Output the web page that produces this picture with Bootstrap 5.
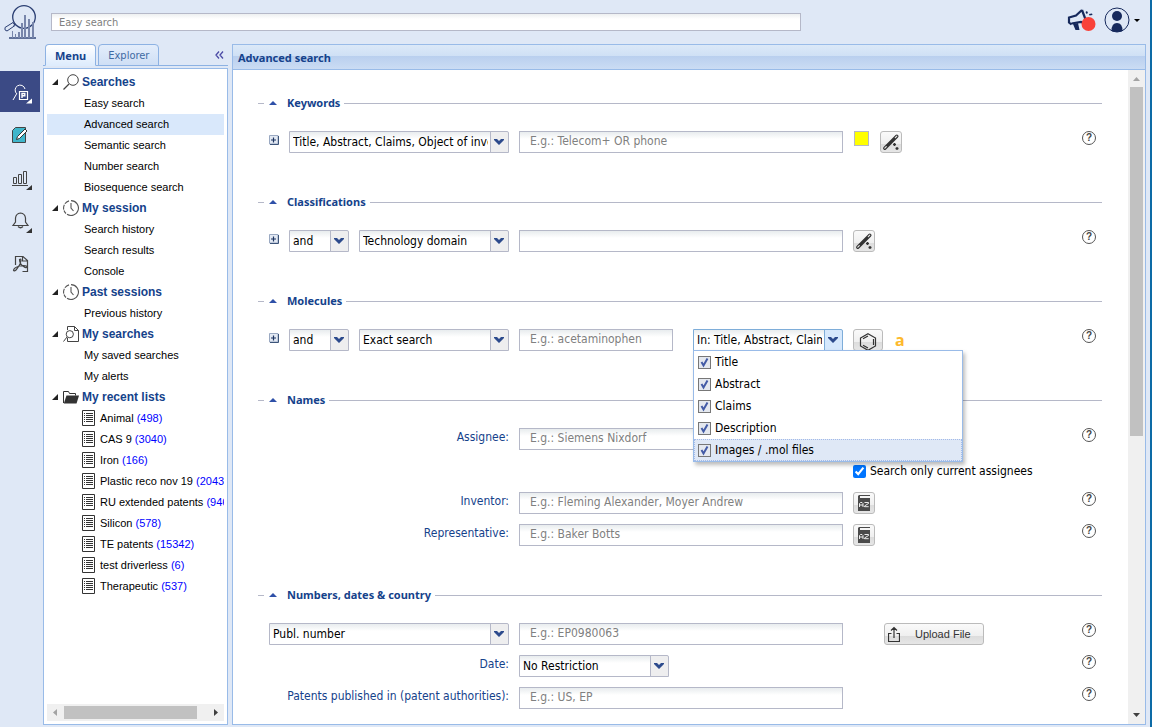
<!DOCTYPE html>
<html lang="en">
<head>
<meta charset="utf-8">
<meta name="viewport" content="width=device-width, initial-scale=1">
<title>Advanced search</title>
<link href="https://cdn.jsdelivr.net/npm/bootstrap@5.3.0/dist/css/bootstrap.min.css" rel="stylesheet">
<style>
:root{--ui:"DejaVu Sans Condensed","Noto Sans",sans-serif;--head:"Noto Sans","DejaVu Sans Condensed",sans-serif;--tree:"Liberation Sans",Arial,sans-serif;
  --frame:#99bbe8;--field:#b5b8c8;--ink:#15428b;--back:#dfe8f6}
body{font:12px/16px var(--ui);color:#000;background:var(--back);border-right:2px solid #0d6ba6}
a{text-decoration:none;color:inherit}
svg{display:block;flex:none}
.topbar{height:44px;padding:0 10px 0 4px}
.workspace{min-height:0;padding-bottom:2px}
.quick{height:18px;width:100%;padding:0 7px;border:1px solid var(--field);background:linear-gradient(#eef0f1,#fff 5px);font:11px/16px var(--ui);border-radius:0}
.quick-box{width:66%;max-width:750px;margin-left:15px}
::placeholder{color:#808080;opacity:1}
.plain{border:0;background:none;padding:0}
/* icon rail */
.rail{width:40px;margin-right:3px;padding-top:27px;gap:2px}
.rail a{height:41px;color:#444}
.rail a.current{background:#3b4a85;color:#fff}
/* side panel */
.side{width:185px;margin-right:4px}
.tab-strip{height:22px;padding-left:2px;gap:2px;border-bottom:1px solid #8db2e3}
.tab-link{height:22px;padding:0 9px;border:1px solid #8db2e3;border-radius:4px 4px 0 0;background:linear-gradient(#e3edfb,#cfdff5);color:#416aa3;font:11px/21px var(--ui)}
.tab-link.current{background:linear-gradient(#fff,#deecfd);border-bottom-color:#deecfd;color:var(--ink);font:bold 11px/21px var(--head)}
.side-body{margin-top:2px;border:1px solid var(--frame);background:#fff;padding:3px}
.tree{font:11px/21px var(--tree);white-space:nowrap}
.tree a{display:flex;align-items:center;height:21px;padding-left:37px}
.tree svg{margin-bottom:1px}
.tree a.picked{background:#d9e8fb}
.tree a.folder{padding-left:5px;font-weight:bold;font-size:12px;color:var(--ink)}
.folder svg:first-child{margin-right:5px}
.folder svg:last-of-type{margin-right:3px}
.tree a.saved{padding-left:35px;gap:5px}
.saved b{font-weight:normal;color:#00f}
.track{background:#f0f0f0}
.track-x{height:17px}.track-y{width:17px}
.thumb{background:#c1c1c1}
.track-end{flex:0 0 17px;height:17px}
/* main panel */
.panel-box{min-width:0;border:1px solid var(--frame);margin-right:4px;background:#fff}
.panel-title{height:25px;padding-left:5px;border-bottom:1px solid var(--frame);background:linear-gradient(#dce9f8 0,#cfe0f5 11px,#b9cfee 11px,#cbdcf4);color:var(--ink);font:bold 11px/26px var(--head)}
.form-area{padding:23px 26px 0 25px;overflow:hidden}
.group{margin-bottom:39px}
.legend-line{height:20px;margin-bottom:18px;color:var(--ink);font:bold 11px/20px var(--head)}
.legend-line::before,.legend-line::after{content:"";height:1px;background:var(--field);width:6px}
.legend-line::after{flex:1}
.legend-line button{width:23px;height:20px;padding-left:5px}
.legend-line h2{font:inherit;margin:0 4px 0 0}
.lines{display:grid;gap:10px;padding:0 6px 0 11px}
.line{display:grid;grid-template-columns:240px minmax(0,324px) minmax(0,1fr) auto;column-gap:10px;height:22px;align-items:start}
.line>div{display:flex;gap:10px;min-width:0}
.line>label{color:var(--ink);text-align:right;line-height:18px}
.help{width:14px;height:14px;border:1px solid #555;border-radius:50%;font:bold 10px/12px var(--tree);color:#444;text-align:center;padding:0;background:#fff}
.expand{margin-top:4px;width:10px;height:10px;flex:none}
.box{height:22px;width:100%;padding:0 10px 3px;border:1px solid var(--field);border-radius:0;background:linear-gradient(#e8ecee,#fff 7px);font:12px/16px var(--ui)}
.combo{height:22px;min-width:0;padding:0 20px 0 3px;border:1px solid var(--field);border-radius:0 2px 0 0;font:12px/20px var(--ui);color:#000;appearance:none;text-align:left;white-space:nowrap;overflow:hidden;
  background:url("data:image/svg+xml,%3Csvg xmlns='http://www.w3.org/2000/svg' width='18' height='20'%3E%3Crect width='18' height='20' fill='%23eeeeef'/%3E%3Cpath d='M.5 0v20' stroke='%23b5b8c8'/%3E%3Cpath d='M4 7h3l2 2 2-2h3v1l-5 5-5-5z' fill='%232c4a8c'/%3E%3C/svg%3E") right top no-repeat,linear-gradient(#e8ecee,#fff 7px)}
.combo.opened{border-color:#7eadd9;background-image:url("data:image/svg+xml,%3Csvg xmlns='http://www.w3.org/2000/svg' width='18' height='20'%3E%3Crect width='18' height='20' fill='%23d6e8fc'/%3E%3Cpath d='M.5 0v20' stroke='%237eadd9'/%3E%3Cpath d='M4 7h3l2 2 2-2h3v1l-5 5-5-5z' fill='%232c4a8c'/%3E%3C/svg%3E"),linear-gradient(#e8ecee,#fff 7px)}
.combo span{display:block;overflow:hidden}
.w-and{width:60px}.w-mid{width:150px}
.tool{height:22px;width:22px;flex:none;display:flex;align-items:center;justify-content:center;padding:0;border:1px solid #bbb;border-radius:3px;background:linear-gradient(#fafafa,#efefef 60%,#dcdcdc 60%,#e6e6e6);color:#333}
.tool.wide{width:30px}
.upload{width:100px;margin-left:31px;justify-content:flex-start;padding-left:3px;gap:15px;font:11px/20px var(--tree)}
.swatch{width:15px;height:15px;margin:0 1px;border:1px solid var(--field);background:#ff0;padding:0}
.letter{font:bold 16px/22px var(--head);color:#fdb92c;margin-left:2px}
.picker{position:relative;margin-left:10px;flex:none}
.picker .dropdown-menu{top:21px;left:0;width:270px;padding:0;border:1px solid var(--frame);border-radius:0;font-size:12px;color:#000;box-shadow:2px 3px 4px #0004}
.choice{display:flex;align-items:center;gap:4px;height:22px;padding:0 3px;border:1px dotted transparent}
.choice.hovered{background:var(--back);border-color:#a3bae9}
.choice input{appearance:none;width:13px;height:13px;margin:1px 0 0;border:1px solid #777;background:#e4e8ef url("data:image/svg+xml,%3Csvg xmlns='http://www.w3.org/2000/svg' width='11' height='11'%3E%3Cpath d='M2.500 5l2 3.500L8.500 1.500' fill='none' stroke='%23435ba6' stroke-width='2'/%3E%3C/svg%3E")}
.choice span{line-height:20px}
.line>.tick{align-items:center;height:22px;gap:4px}
.tick input{width:13px;height:13px;margin:0;accent-color:#0075ff}
</style>
</head>
<body class="vh-100 d-flex flex-column overflow-hidden">
<svg width="0" height="0" class="position-absolute" aria-hidden="true">
  <symbol id="i-open" viewBox="0 0 6 6"><path d="M6 0v6H0z" fill="#222"/></symbol>
  <symbol id="i-lens" viewBox="0 0 16 16"><g fill="none" stroke="#444"><circle cx="10" cy="6" r="5.300"/><path d="M6 10L.5 15.500" stroke-width="1.300"/></g></symbol>
  <symbol id="i-clock" viewBox="0 0 16 16"><g fill="none" stroke="#555" stroke-width="1.100"><path d="M8 .6a7.400 7.400 0 1 1-4 13.600"/><path d="M6 .9a7.400 7.400 0 0 0-3 12.600" stroke-dasharray="5 1"/><path d="M8 3v5l2.500 3"/></g></symbol>
  <symbol id="i-doclens" viewBox="0 0 16 16"><g fill="none" stroke="#444"><path d="M4.500 4V.5h7l4 4v11h-11V12M11.500.5v4h4"/><circle cx="6.800" cy="8.200" r="3.600"/><path d="M4 11l-3.500 4.500"/></g></symbol>
  <symbol id="i-folder" viewBox="0 0 16 14"><path d="M.5 13V1.500h5l1 2h6V5.500" fill="none" stroke="#333"/><path d="M3.500 5.500H16L13.500 13.500H.8z" fill="#333"/></symbol>
  <symbol id="i-list" viewBox="0 0 13 16"><path d="M.5.500h12v15H.5z" fill="#fff" stroke="#333"/><path d="M4 3.500h7M4 5.500h7M4 7.500h7M4 9.500h7M4 11.500h7M2 3.500h1M2 5.500h1M2 7.500h1M2 9.500h1M2 11.500h1" stroke="#333"/></symbol>
  <symbol id="i-plus" viewBox="0 0 10 10"><path d="M.5.500h8.500v8.500H.5z" fill="#e3e9f3" stroke="#9aa9c2"/><path d="M9.500 1v8.500H1" fill="none" stroke="#3c5479"/><path d="M2 5h5M4.500 2.500v5" stroke="#1d3461" stroke-width="1.200"/></symbol>
  <symbol id="i-up" viewBox="0 0 8 4"><path d="M4 0l4 4H0z" fill="#2e50a8"/></symbol>
  <symbol id="i-wand" viewBox="0 0 18 18"><path d="M2.800 15.200L14.800 3.200" stroke="#333" stroke-width="3.400" stroke-linecap="round"/><path d="M2.800 15.200l1.500-1.500M13.300 4.700l1.500-1.500" stroke="#e5e5e5" stroke-width="1.200" stroke-linecap="round"/><path d="M11 11.500h3M12.500 10v3M13.500 15.500h3M15 14v3" stroke="#333" stroke-width="1.300"/></symbol>
  <symbol id="i-az" viewBox="0 0 14 16"><path d="M2 0h11v1H3v2h10v13H1V1z" fill="#4a4a4a"/><path d="M2.500 12V8.500L3.500 7.500h1.500l1 1V12M2.500 10h3.500M7.500 7.500h4v1l-4 2.500v.7h4.200" fill="none" stroke="#fff" stroke-width=".9"/></symbol>
</svg>

<header class="topbar d-flex align-items-center flex-shrink-0">
  <a href="#" aria-label="Home"><svg width="32" height="34" viewBox="0 0 32 34"><g fill="none" stroke="#2b3f73"><circle cx="20" cy="12" r="11.300" stroke-width="1.300"/><path d="M11.500 19l-2 1.500M1 22.500l8-5 2 3-8 5.500q-3-.5-2-3.500z"/><path d="M5 33h27" stroke-width="1.400"/></g><path d="M8 26h1v7H8zM11 29h1v4h-1zM14 27h2v6h-2zM17 18h2v15h-2zM20 10h2v23h-2zM24 14h2v19h-2zM28 17h2v16h-2z" fill="#7886ab"/></svg></a>
  <div class="quick-box"><input class="quick" type="text" placeholder="Easy search" aria-label="Easy search"></div>
  <div class="d-flex align-items-center ms-auto gap-2 pb-1">
    <button class="plain" type="button" aria-label="Announcements"><svg width="29" height="24" viewBox="0 0 29 24"><path d="M15 2L9 7.500 2 9.500v5l2.500 2M15 2l4.500 12M4.500 15.500L14 14l6 2.500" fill="none" stroke="#16295c" stroke-width="2.200"/><path d="M6 16l2.500 6h4l-1.500-7zM18.500 4l1.500-1 1 2-1.500 1zM22 6l3-.5.5 1.500-3 .5z" fill="#16295c"/><circle cx="21.500" cy="16" r="7" fill="#f9423a"/></svg></button>
    <button class="plain d-flex align-items-center" type="button" aria-label="Account"><svg width="36" height="26" viewBox="0 0 36 26"><circle cx="13" cy="13" r="12" fill="none" stroke="#16295c"/><circle cx="13" cy="9" r="5" fill="#16295c"/><path d="M7.500 24q0-8 5.500-8t5.500 8q-5.500 2-11 0z" fill="#16295c"/><path d="M30 12h6l-3 3z" fill="#000"/></svg></button>
  </div>
</header>

<div class="workspace d-flex flex-fill">
  <nav class="rail d-flex flex-column flex-shrink-0" aria-label="Sections">
    <a href="#" class="current d-flex align-items-center justify-content-center" aria-label="Patents"><svg width="40" height="41" viewBox="0 0 40 41"><g fill="none" stroke="currentColor"><path d="M17 23a5 5 0 1 1 8-5M16.500 23L13 29"/><path d="M19.500 20.500h8v8h-8z" stroke-width="1.200"/><path d="M22 27v-4.500h2.800v2.300H22" stroke-width="1.400"/></g><path d="M32 27.500v5h-6z" fill="#fff"/></svg></a>
    <a href="#" class="d-flex justify-content-center" aria-label="Notes"><svg width="40" height="41" viewBox="0 0 40 41"><path d="M15.500 13.500h10v15h-13V16.500z" fill="#3fb6cb" stroke="#444"/><path d="M16.500 25.500l1-3 7.500-7.500 2 2-7.500 7.500z" fill="#fff" stroke="#333"/></svg></a>
    <a href="#" class="d-flex justify-content-center" aria-label="Statistics"><svg width="40" height="41" viewBox="0 0 40 41"><path d="M13.500 20.500h3v6h-3zM18.500 17.500h3v9h-3zM23.500 14.500h3v12h-3zM12 28.500h16" fill="none" stroke="currentColor"/><path d="M32 28v5h-6z" fill="#333"/></svg></a>
    <a href="#" class="d-flex justify-content-center" aria-label="Alerts"><svg width="40" height="41" viewBox="0 0 40 41"><path d="M13 25.500h15l-2.500-3.500V18q-.5-4.500-5-5-4.500.5-5 5v4zM18 26.500q2.500 2.500 5 0" fill="none" stroke="currentColor" stroke-width="1.200"/><path d="M32 28v5h-6z" fill="#333"/></svg></a>
    <a href="#" class="d-flex justify-content-center" aria-label="Documents"><svg width="40" height="41" viewBox="0 0 40 41"><path d="M15.500 22v-8.500h7.500l4.500 4v11h-5M22.500 13.500v4.500h5" fill="none" stroke="currentColor" stroke-width="1.200"/><path d="M19.500 16.500q1.500-1 1.500 1-.5 4-5 9.500-2 1.500-2.500.3.500-2.800 6-4.300 5-1 7.500.3 0 1.700-2 1.200-5.500-3-5.500-8z" fill="none" stroke="currentColor" stroke-width="1.200"/></svg></a>
  </nav>

  <aside class="side d-flex flex-column flex-shrink-0">
    <div class="tab-strip d-flex">
      <a href="#" class="tab-link current">Menu</a>
      <a href="#" class="tab-link">Explorer</a>
      <button class="plain ms-auto px-1" type="button" aria-label="Collapse menu"><svg width="9" height="8" viewBox="0 0 9 8"><path d="M4 .5L1 4l3 3.500M8 .5L5 4l3 3.500" fill="none" stroke="#4b4aa5" stroke-width="1.300"/></svg></button>
    </div>
    <div class="side-body d-flex flex-column flex-fill overflow-hidden">
      <nav class="tree flex-fill overflow-hidden" aria-label="Menu">
        <a href="#" class="folder"><svg width="6" height="6"><use href="#i-open"/></svg><svg width="16" height="16"><use href="#i-lens"/></svg>Searches</a>
        <a href="#">Easy search</a>
        <a href="#" class="picked">Advanced search</a>
        <a href="#">Semantic search</a>
        <a href="#">Number search</a>
        <a href="#">Biosequence search</a>
        <a href="#" class="folder"><svg width="6" height="6"><use href="#i-open"/></svg><svg width="16" height="16"><use href="#i-clock"/></svg>My session</a>
        <a href="#">Search history</a>
        <a href="#">Search results</a>
        <a href="#">Console</a>
        <a href="#" class="folder"><svg width="6" height="6"><use href="#i-open"/></svg><svg width="16" height="16"><use href="#i-clock"/></svg>Past sessions</a>
        <a href="#">Previous history</a>
        <a href="#" class="folder"><svg width="6" height="6"><use href="#i-open"/></svg><svg width="16" height="16"><use href="#i-doclens"/></svg>My searches</a>
        <a href="#">My saved searches</a>
        <a href="#">My alerts</a>
        <a href="#" class="folder"><svg width="6" height="6"><use href="#i-open"/></svg><svg width="16" height="14"><use href="#i-folder"/></svg>My recent lists</a>
        <a href="#" class="saved"><svg width="13" height="16"><use href="#i-list"/></svg><span>Animal <b>(498)</b></span></a>
        <a href="#" class="saved"><svg width="13" height="16"><use href="#i-list"/></svg><span>CAS 9 <b>(3040)</b></span></a>
        <a href="#" class="saved"><svg width="13" height="16"><use href="#i-list"/></svg><span>Iron <b>(166)</b></span></a>
        <a href="#" class="saved"><svg width="13" height="16"><use href="#i-list"/></svg><span>Plastic reco nov 19 <b>(2043)</b></span></a>
        <a href="#" class="saved"><svg width="13" height="16"><use href="#i-list"/></svg><span>RU extended patents <b>(946)</b></span></a>
        <a href="#" class="saved"><svg width="13" height="16"><use href="#i-list"/></svg><span>Silicon <b>(578)</b></span></a>
        <a href="#" class="saved"><svg width="13" height="16"><use href="#i-list"/></svg><span>TE patents <b>(15342)</b></span></a>
        <a href="#" class="saved"><svg width="13" height="16"><use href="#i-list"/></svg><span>test driverless <b>(6)</b></span></a>
        <a href="#" class="saved"><svg width="13" height="16"><use href="#i-list"/></svg><span>Therapeutic <b>(537)</b></span></a>
      </nav>
      <div class="track track-x d-flex align-items-center" aria-hidden="true">
        <svg class="track-end" viewBox="0 0 17 17"><path d="M10 5v7L6 8.500z" fill="#a3a3a3"/></svg>
        <div class="flex-fill"><div class="thumb" style="width:93%;height:13px"></div></div>
        <svg class="track-end" viewBox="0 0 17 17"><path d="M7 5v7l4-3.500z" fill="#404040"/></svg>
      </div>
    </div>
  </aside>

  <main class="panel-box d-flex flex-column flex-fill">
    <h1 class="panel-title m-0 flex-shrink-0">Advanced search</h1>
    <div class="d-flex flex-fill" style="min-height:0">
      <form class="form-area flex-fill">
        <section class="group">
          <div class="legend-line d-flex align-items-center"><button class="plain" type="button" aria-label="Collapse Keywords"><svg width="8" height="4"><use href="#i-up"/></svg></button><h2>Keywords</h2></div>
          <div class="lines"><div class="line">
            <div><button class="plain expand" type="button" aria-label="Add keyword line"><svg width="10" height="10"><use href="#i-plus"/></svg></button><select class="combo flex-fill" aria-label="Keyword fields"><option>Title, Abstract, Claims, Object of invention</option></select></div>
            <input class="box" type="text" placeholder="E.g.: Telecom+ OR phone" aria-label="Keywords">
            <div><button class="swatch" type="button" aria-label="Highlight colour"></button><button class="tool" type="button" aria-label="Wizard"><svg width="18" height="18"><use href="#i-wand"/></svg></button></div>
            <button class="help" type="button">?</button>
          </div></div>
        </section>

        <section class="group">
          <div class="legend-line d-flex align-items-center"><button class="plain" type="button" aria-label="Collapse Classifications"><svg width="8" height="4"><use href="#i-up"/></svg></button><h2>Classifications</h2></div>
          <div class="lines"><div class="line">
            <div><button class="plain expand" type="button" aria-label="Add classification line"><svg width="10" height="10"><use href="#i-plus"/></svg></button><select class="combo w-and" aria-label="Operator"><option>and</option></select><select class="combo w-mid" aria-label="Classification"><option>Technology domain</option></select></div>
            <input class="box" type="text" aria-label="Classification value">
            <div><button class="tool" type="button" aria-label="Wizard"><svg width="18" height="18"><use href="#i-wand"/></svg></button></div>
            <button class="help" type="button">?</button>
          </div></div>
        </section>

        <section class="group">
          <div class="legend-line d-flex align-items-center"><button class="plain" type="button" aria-label="Collapse Molecules"><svg width="8" height="4"><use href="#i-up"/></svg></button><h2>Molecules</h2></div>
          <div class="lines"><div class="line">
            <div><button class="plain expand" type="button" aria-label="Add molecule line"><svg width="10" height="10"><use href="#i-plus"/></svg></button><select class="combo w-and" aria-label="Operator"><option>and</option></select><select class="combo w-mid" aria-label="Search type"><option>Exact search</option></select></div>
            <div>
              <input class="box" type="text" placeholder="E.g.: acetaminophen" aria-label="Molecule">
              <div class="picker">
                <button class="combo opened w-mid" type="button" aria-haspopup="true" aria-expanded="true"><span>In: Title, Abstract, Claims</span></button>
                <div class="dropdown-menu show">
                  <label class="choice"><input type="checkbox" checked><span>Title</span></label>
                  <label class="choice"><input type="checkbox" checked><span>Abstract</span></label>
                  <label class="choice"><input type="checkbox" checked><span>Claims</span></label>
                  <label class="choice"><input type="checkbox" checked><span>Description</span></label>
                  <label class="choice hovered"><input type="checkbox" checked><span>Images / .mol files</span></label>
                </div>
              </div>
            </div>
            <div><button class="tool wide align-items-end" type="button" aria-label="Draw molecule"><svg width="18" height="17" viewBox="0 0 18 17"><path d="M9 .7l7.500 4.300v8L9 17.300 1.500 13V5zM9 3L4 5.800M14.500 6v6M9 15l-5-2.800" fill="none" stroke="#333" stroke-width="1.200"/></svg></button><span class="letter">a</span></div>
            <button class="help" type="button">?</button>
          </div></div>
        </section>

        <section class="group">
          <div class="legend-line d-flex align-items-center"><button class="plain" type="button" aria-label="Collapse Names"><svg width="8" height="4"><use href="#i-up"/></svg></button><h2>Names</h2></div>
          <div class="lines">
            <div class="line"><label for="assignee">Assignee:</label><input class="box" id="assignee" type="text" placeholder="E.g.: Siemens Nixdorf"><div><button class="tool" type="button" aria-label="Browse assignees"><svg width="14" height="16"><use href="#i-az"/></svg></button></div><button class="help" type="button">?</button></div>
            <div class="line"><span></span><span></span><div class="tick"><input type="checkbox" id="current" checked><label for="current" class="text-nowrap">Search only current assignees</label></div></div>
            <div class="line"><label for="inventor">Inventor:</label><input class="box" id="inventor" type="text" placeholder="E.g.: Fleming Alexander, Moyer Andrew"><div><button class="tool" type="button" aria-label="Browse inventors"><svg width="14" height="16"><use href="#i-az"/></svg></button></div><button class="help" type="button">?</button></div>
            <div class="line"><label for="representative">Representative:</label><input class="box" id="representative" type="text" placeholder="E.g.: Baker Botts"><div><button class="tool" type="button" aria-label="Browse representatives"><svg width="14" height="16"><use href="#i-az"/></svg></button></div><button class="help" type="button">?</button></div>
          </div>
        </section>

        <section class="group">
          <div class="legend-line d-flex align-items-center"><button class="plain" type="button" aria-label="Collapse Numbers, dates and country"><svg width="8" height="4"><use href="#i-up"/></svg></button><h2>Numbers, dates &amp; country</h2></div>
          <div class="lines">
            <div class="line"><select class="combo" aria-label="Number type"><option>Publ. number</option></select><input class="box" type="text" placeholder="E.g.: EP0980063" aria-label="Number"><div><button class="tool upload" type="button"><svg width="12" height="17" viewBox="0 0 12 17"><path d="M3.500 7.500h-3v8h11v-8h-3M6 12V2M3 4.500l3-3 3 3" fill="none" stroke="#333" stroke-width="1.200"/></svg>Upload File</button></div><button class="help" type="button">?</button></div>
            <div class="line"><label for="date">Date:</label><div><select class="combo w-mid" id="date"><option>No Restriction</option></select></div><span></span><button class="help" type="button">?</button></div>
            <div class="line"><label for="authorities" class="text-nowrap">Patents published in (patent authorities):</label><input class="box" id="authorities" type="text" placeholder="E.g.: US, EP"><span></span><button class="help" type="button">?</button></div>
          </div>
        </section>
      </form>
      <div class="track track-y d-flex flex-column align-items-center flex-shrink-0" aria-hidden="true">
        <svg class="track-end" width="17" height="17" viewBox="0 0 17 17"><path d="M5 11h7L8.500 7z" fill="#a3a3a3"/></svg>
        <div class="flex-fill"><div class="thumb h-100" style="width:13px;max-height:349px"></div></div>
        <svg class="track-end" width="17" height="17" viewBox="0 0 17 17"><path d="M5 6h7l-3.500 4z" fill="#404040"/></svg>
      </div>
    </div>
  </main>
</div>
<script src="https://cdn.jsdelivr.net/npm/bootstrap@5.3.0/dist/js/bootstrap.bundle.min.js"></script>
</body>
</html>
